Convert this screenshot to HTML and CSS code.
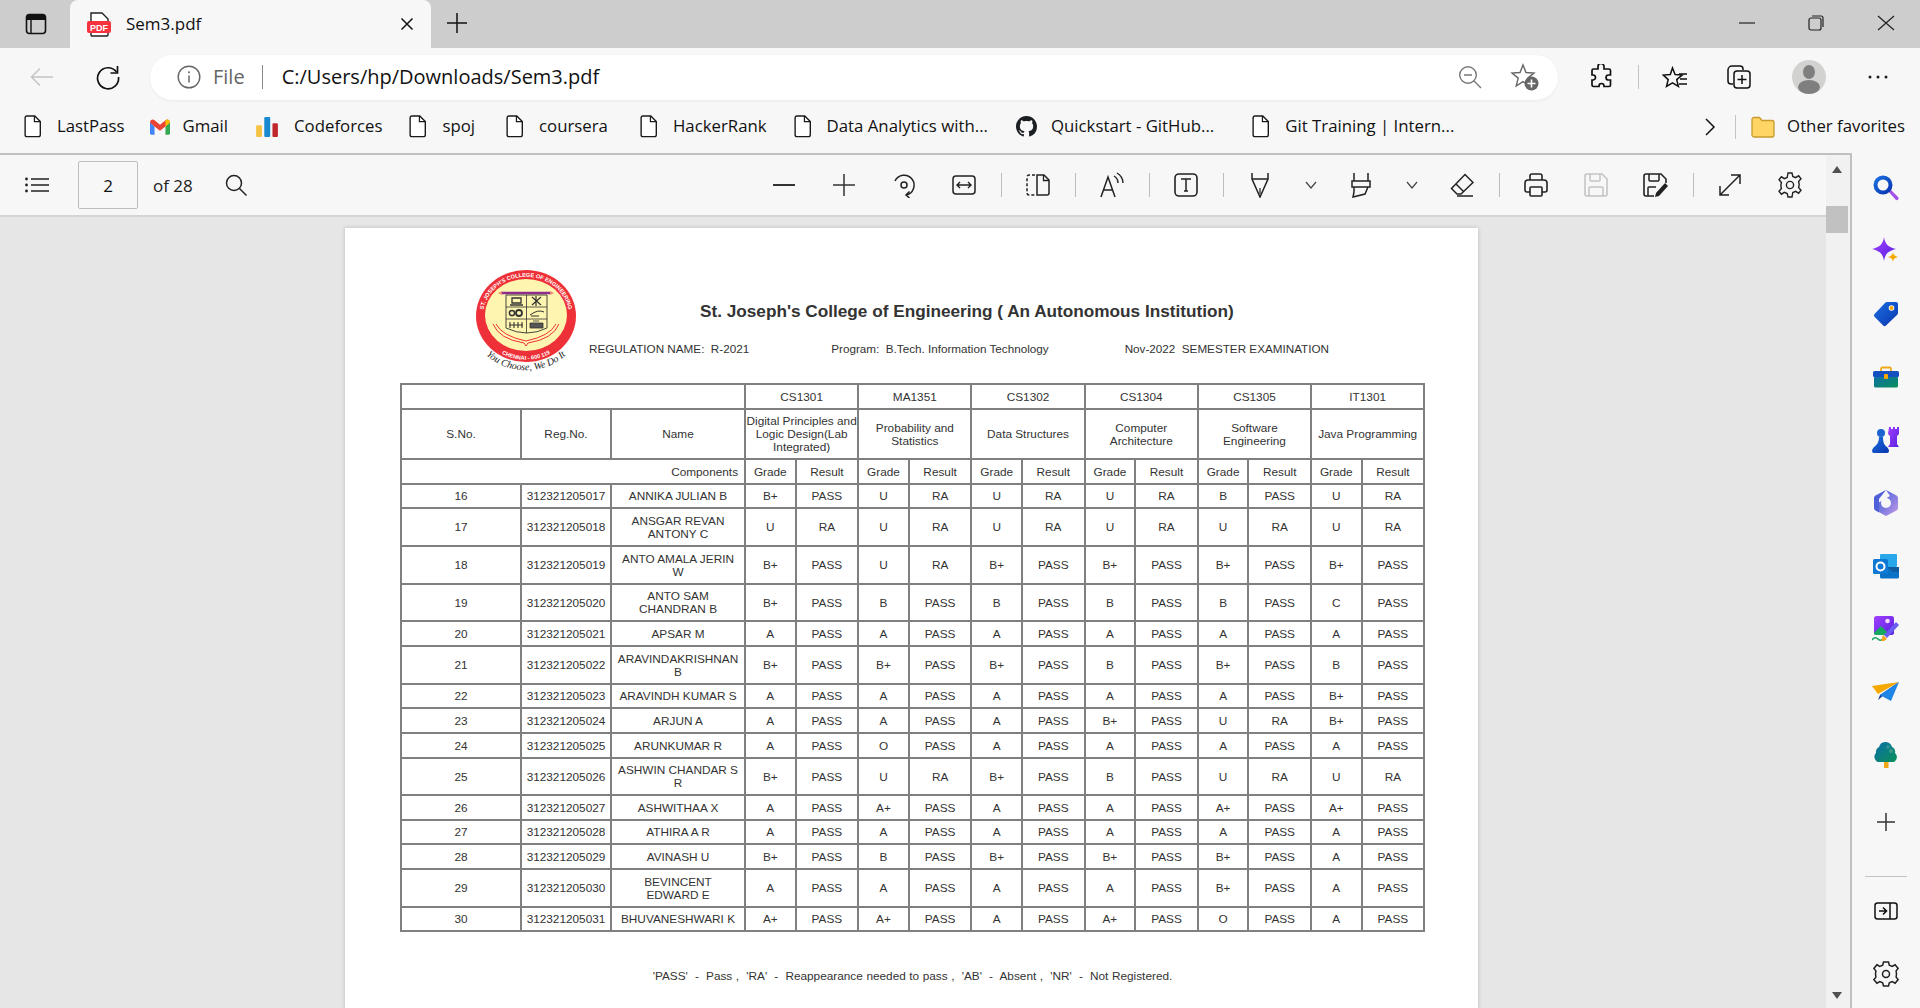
FILE: index.html
```html
<!DOCTYPE html>
<html lang="en">
<head>
  <meta charset="UTF-8">
  <title>Sem3.pdf</title>
  <link rel="stylesheet" href="styles.css">
</head>
<body>
  <svg class="sprites" width="0" height="0">
    <defs>
      <symbol id="doc" viewBox="0 0 18 24"><path d="M2.500 1h8.500l6 6v14a2 2 0 0 1-2 2H2.500a2 2 0 0 1-2-2V3a2 2 0 0 1 2-2z" transform="translate(.3 0) scale(.96 .98)" fill="#fff" stroke="#1a1a1a" stroke-width="1.500"/><path d="M10.500 1v6h6" fill="none" stroke="#1a1a1a" stroke-width="1.300"/></symbol>
      <linearGradient id="g-blue" x1="0" y1="0" x2="1" y2="1"><stop offset="0" stop-color="#1b6fe0"/><stop offset="1" stop-color="#0a35b0"/></linearGradient>
      <linearGradient id="g-purple" x1="0" y1="0" x2="1" y2="1"><stop offset="0" stop-color="#a040ff"/><stop offset="1" stop-color="#5a20e0"/></linearGradient>
      <linearGradient id="g-teal" x1="0" y1="0" x2="1" y2="1"><stop offset="0" stop-color="#0d6fa8"/><stop offset="1" stop-color="#0a8f5a"/></linearGradient>
      <linearGradient id="g-m365" x1="0" y1="0" x2="1" y2="1"><stop offset="0" stop-color="#3f63d8"/><stop offset=".5" stop-color="#7d7ae0"/><stop offset="1" stop-color="#c59ae6"/></linearGradient>
    </defs>
  </svg>

  <div class="app">
    <div class="tabstrip">
      <div class="tabstrip-btn">
        <svg width="22" height="22" viewBox="0 0 22 22"><rect x="1.500" y="1.500" width="19" height="19" rx="3" fill="none" stroke="#111" stroke-width="1.600"/><path d="M3 2h16a1.500 1.500 0 0 1 1.500 1.500V7h-19V3.500A1.500 1.500 0 0 1 3 2z" fill="#111"/><path d="M6 7v13" stroke="#111" stroke-width="1.400"/></svg>
      </div>
      <div class="tab">
        <svg width="24" height="25" viewBox="0 0 24 25"><path d="M4 1h11l6 6v16a1 1 0 0 1-1 1H5a1 1 0 0 1-1-1z" fill="#fff" stroke="#222" stroke-width="1.400"/><rect x="0" y="9" width="24" height="12" rx="2" fill="#f5333f"/><text x="12" y="18.500" class="pdf-mark">PDF</text></svg>
        <span class="tab-title">Sem3.pdf</span>
        <svg class="tab-close" width="14" height="14" viewBox="0 0 14 14"><path d="M1.500 1.500l11 11M12.500 1.500l-11 11" stroke="#111" stroke-width="1.500"/></svg>
      </div>
      <div class="new-tab">
        <svg width="22" height="22" viewBox="0 0 22 22"><path d="M11 1v20M1 11h20" stroke="#111" stroke-width="1.500"/></svg>
      </div>
      <div class="window-btns">
        <svg width="16" height="16" viewBox="0 0 16 16"><path d="M0 8h16" stroke="#222" stroke-width="1.200"/></svg>
        <svg width="16" height="16" viewBox="0 0 16 16"><rect x="1" y="3" width="12" height="12" rx="2" fill="none" stroke="#222" stroke-width="1.200"/><path d="M4 1h9a2 2 0 0 1 2 2v9" fill="none" stroke="#222" stroke-width="1.200"/></svg>
        <svg width="18" height="16" viewBox="0 0 18 16"><path d="M1 1l16 14M17 1L1 15" stroke="#222" stroke-width="1.200"/></svg>
      </div>
    </div>

    <div class="toolbar">
      <div class="nav-cell">
        <svg width="24" height="20" viewBox="0 0 24 20"><path d="M23 10H1.500M10 1.500L1.500 10l8.500 8.500" fill="none" stroke="#c4c4c4" stroke-width="1.500"/></svg>
      </div>
      <div class="nav-cell">
        <svg width="26" height="26" viewBox="0 0 26 26"><path d="M21.500 8A10.500 10.500 0 1 0 23.500 13" fill="none" stroke="#111" stroke-width="1.700"/><path d="M22.500 2v7h-7" fill="none" stroke="#111" stroke-width="1.700"/></svg>
      </div>
      <div class="address">
        <svg width="24" height="24" viewBox="0 0 24 24"><circle cx="12" cy="12" r="10.800" fill="none" stroke="#666" stroke-width="1.400"/><path d="M12 10.500v7" stroke="#666" stroke-width="1.500"/><circle cx="12" cy="7.300" r="1" fill="#666"/></svg>
        <span class="addr-file">File</span>
        <span class="addr-sep"></span>
        <span class="addr-url">C:/Users/hp/Downloads/Sem3.pdf</span>
        <div class="addr-icons">
          <svg width="24" height="24" viewBox="0 0 24 24"><circle cx="10" cy="10" r="8.300" fill="none" stroke="#777" stroke-width="1.400"/><path d="M6 10h8M16 16l7 7" stroke="#777" stroke-width="1.400"/></svg>
          <svg width="30" height="30" viewBox="0 0 30 30"><path d="M13 3l3 7.500 8 .6-6.200 5 2 7.900L13 19.600 6.200 24l2-7.900-6.200-5 8-.6z" fill="none" stroke="#666" stroke-width="1.400"/><circle cx="21.500" cy="21.500" r="7" fill="#666"/><path d="M21.500 17.500v8M17.500 21.500h8" stroke="#fff" stroke-width="1.600"/></svg>
        </div>
      </div>
      <div class="tool-right first">
        <svg width="22" height="26" viewBox="0 0 22 26"><path d="M8 2.500a3 3 0 0 1 6 0V5h5a1.500 1.500 0 0 1 1.500 1.500V11h-2a2.500 2.500 0 0 0 0 5h2v5a1.500 1.500 0 0 1-1.500 1.500h-5V22a2.500 2.500 0 0 0-5 0v.5H3.500A1.500 1.500 0 0 1 2 21v-5h1a2.500 2.500 0 0 0 0-5H2V6.500A1.500 1.500 0 0 1 3.500 5H8z" fill="none" stroke="#111" stroke-width="1.700"/></svg>
      </div>
      <span class="tool-sep"></span>
      <div class="tool-right">
        <svg width="26" height="26" viewBox="0 0 26 26"><path d="M10 2l2.600 6.600 7 .5-5.400 4.500 1.700 6.900L10 16.800 4 20.500l1.700-6.900L.8 9.100l7-.5z" transform="translate(.5 2)" fill="none" stroke="#111" stroke-width="1.500"/><path d="M17 10h8M18 15h7M17 20h8" stroke="#111" stroke-width="1.500"/></svg>
      </div>
      <div class="tool-right">
        <svg width="26" height="26" viewBox="0 0 26 26"><path d="M7 20H5a3 3 0 0 1-3-3V6a4 4 0 0 1 4-4h8a3 3 0 0 1 3 3v1" fill="none" stroke="#111" stroke-width="1.500"/><rect x="8" y="7" width="16" height="17" rx="3" fill="none" stroke="#111" stroke-width="1.500"/><path d="M16 11v9M11.500 15.500h9" stroke="#111" stroke-width="1.500"/></svg>
      </div>
      <div class="avatar-cell">
        <div class="avatar">
          <svg width="34" height="34" viewBox="0 0 34 34"><circle cx="17" cy="17" r="17" fill="#d2d2d0"/><ellipse cx="17" cy="12" rx="6" ry="7" fill="#7f7f7f"/><ellipse cx="17" cy="27" rx="11" ry="7" fill="#7f7f7f"/></svg>
        </div>
      </div>
      <div class="dots-cell">
        <svg width="22" height="6" viewBox="0 0 22 6"><circle cx="3" cy="3" r="1.500" fill="#222"/><circle cx="11" cy="3" r="1.500" fill="#222"/><circle cx="19" cy="3" r="1.500" fill="#222"/></svg>
      </div>
    </div>

    <div class="bookmarks">
      <div class="bm"><svg width="18" height="23"><use href="#doc"/></svg><span>LastPass</span></div>
      <div class="bm bm-gmail">
        <svg width="20" height="16" viewBox="0 0 22 17"><path d="M0 3v12.500A1.500 1.500 0 0 0 1.500 17H5V8z" fill="#4285f4"/><path d="M22 3v12.500a1.500 1.500 0 0 1-1.500 1.500H17V8z" fill="#34a853"/><path d="M0 3.500C0 .8 3 -.8 5 1l6 5 6-5c2-1.800 5-.2 5 2.500L17 8l-6 4.500L5 8z" fill="#ea4335"/><path d="M17 1c2-1.800 5-.2 5 2.500L17 8z" fill="#fbbc04"/></svg>
        <span>Gmail</span>
      </div>
      <div class="bm bm-cf">
        <svg width="24" height="20" viewBox="0 0 24 22"><rect x="0" y="9" width="6.500" height="13" rx="1.200" fill="#f6c445"/><rect x="9" y="0" width="6.500" height="22" rx="1.200" fill="#1a8ad0"/><rect x="18" y="7" width="6" height="15" rx="1.200" fill="#c0272d"/></svg>
        <span>Codeforces</span>
      </div>
      <div class="bm"><svg width="18" height="23"><use href="#doc"/></svg><span>spoj</span></div>
      <div class="bm bm-coursera"><svg width="18" height="23"><use href="#doc"/></svg><span>coursera</span></div>
      <div class="bm bm-hr"><svg width="18" height="23"><use href="#doc"/></svg><span>HackerRank</span></div>
      <div class="bm"><svg width="18" height="23"><use href="#doc"/></svg><span>Data Analytics with...</span></div>
      <div class="bm bm-gh">
        <svg width="21" height="21" viewBox="0 0 16 16"><path fill="#1b1f23" d="M8 0C3.580 0 0 3.580 0 8c0 3.540 2.290 6.530 5.470 7.590.4.07.55-.17.55-.38 0-.19-.01-.82-.01-1.490-2.010.37-2.530-.49-2.690-.94-.09-.23-.48-.94-.82-1.130-.28-.15-.68-.52-.01-.53.63-.01 1.080.58 1.230.82.72 1.210 1.870.87 2.330.66.07-.52.28-.87.51-1.070-1.780-.2-3.640-.89-3.640-3.950 0-.87.31-1.590.82-2.150-.08-.2-.36-1.020.08-2.120 0 0 .67-.21 2.200.82.64-.18 1.320-.27 2-.27.68 0 1.360.09 2 .27 1.530-1.040 2.200-.82 2.200-.82.44 1.100.16 1.920.08 2.120.51.56.82 1.270.82 2.150 0 3.070-1.870 3.750-3.650 3.950.29.25.54.73.54 1.480 0 1.070-.01 1.930-.01 2.200 0 .21.15.46.55.38A8.013 8.013 0 0 0 16 8c0-4.420-3.580-8-8-8z"/></svg>
        <span>Quickstart - GitHub...</span>
      </div>
      <div class="bm bm-git"><svg width="18" height="23"><use href="#doc"/></svg><span>Git Training | Intern...</span></div>
      <div class="bm-more">
        <svg width="12" height="18" viewBox="0 0 12 18"><path d="M2 1l8 8-8 8" fill="none" stroke="#111" stroke-width="1.500"/></svg>
        <span class="bm-sep"></span>
        <svg width="24" height="22" viewBox="0 0 24 22"><path d="M1 3.500A2 2 0 0 1 3 1.500h5.500L11 4.500h10A2 2 0 0 1 23 6.500V19a2 2 0 0 1-2 2H3a2 2 0 0 1-2-2z" fill="#ffd666" stroke="#c99a2e" stroke-width="1.300"/></svg>
        <span class="bm-other">Other favorites</span>
      </div>
    </div>

    <div class="main">
      <div class="viewer">
        <div class="viewer-col">
          <div class="pdfbar">
            <svg width="24" height="16" viewBox="0 0 24 16"><circle cx="1.500" cy="2" r="1.400" fill="#222"/><circle cx="1.500" cy="8" r="1.400" fill="#222"/><circle cx="1.500" cy="14" r="1.400" fill="#222"/><path d="M6 2h18M6 8h18M6 14h18" stroke="#222" stroke-width="1.400"/></svg>
            <div class="page-input">2</div>
            <span class="page-of">of 28</span>
            <svg class="pdf-search" width="22" height="22" viewBox="0 0 22 22"><circle cx="9" cy="9" r="7.500" fill="none" stroke="#222" stroke-width="1.500"/><path d="M14.500 14.500l7 7" stroke="#222" stroke-width="1.500"/></svg>

            <div class="pdf-tools">
              <div class="tool"><svg width="24" height="24" viewBox="0 0 24 24"><path d="M1 12h22" stroke="#333" stroke-width="2"/></svg></div>
              <div class="tool"><svg width="24" height="24" viewBox="0 0 24 24"><path d="M12 1v22M1 12h22" stroke="#333" stroke-width="1.500"/></svg></div>
              <div class="tool"><svg width="26" height="26" viewBox="0 0 26 26"><path d="M4 9a10 10 0 1 1 11 14" fill="none" stroke="#222" stroke-width="1.500"/><path d="M18.500 19.500L15 23l3.500 3" fill="none" stroke="#222" stroke-width="1.500"/><circle cx="13" cy="13" r="3" fill="none" stroke="#222" stroke-width="1.500"/></svg></div>
              <div class="tool"><svg width="24" height="20" viewBox="0 0 24 20"><rect x="1" y="1" width="22" height="18" rx="3" fill="none" stroke="#222" stroke-width="1.500"/><path d="M5 10h14M8 7l-3 3 3 3M16 7l3 3-3 3" fill="none" stroke="#222" stroke-width="1.400"/></svg></div>
              <span class="tool-div"></span>
              <div class="tool"><svg width="24" height="22" viewBox="0 0 24 22"><path d="M9 1H3a2 2 0 0 0-2 2v16a2 2 0 0 0 2 2h6" fill="none" stroke="#222" stroke-width="1.500" stroke-dasharray="3 2"/><path d="M11 1h7l5 5v13a2 2 0 0 1-2 2H11z" fill="none" stroke="#222" stroke-width="1.500"/><path d="M17.500 1v5.500H23" fill="none" stroke="#222" stroke-width="1.300"/></svg></div>
              <span class="tool-div"></span>
              <div class="tool"><svg width="24" height="26" viewBox="0 0 24 26"><path d="M1 25L8 5l7 20M3.500 18h9" fill="none" stroke="#222" stroke-width="1.500"/><path d="M14 4a8 8 0 0 1 4 7M17 1a12 12 0 0 1 6 10" fill="none" stroke="#222" stroke-width="1.400"/></svg></div>
              <span class="tool-div"></span>
              <div class="tool"><svg width="24" height="24" viewBox="0 0 24 24"><rect x="1" y="1" width="22" height="22" rx="4" fill="none" stroke="#222" stroke-width="1.600"/><path d="M7 6h10M12 6v12M10 18h4" fill="none" stroke="#222" stroke-width="1.500"/></svg></div>
              <span class="tool-div"></span>
              <div class="tool"><svg width="24" height="26" viewBox="0 0 24 26"><path d="M4 1v6l8 18 8-18V1M4 7h16" fill="none" stroke="#222" stroke-width="1.500"/><path d="M12 16v6" stroke="#222" stroke-width="1.200"/></svg></div>
              <div class="tool-chev"><svg width="12" height="8" viewBox="0 0 12 8"><path d="M1 1l5 6 5-6" fill="none" stroke="#444" stroke-width="1.200"/></svg></div>
              <div class="tool"><svg width="24" height="26" viewBox="0 0 24 26"><path d="M5 1v8M19 1v8M3 9h18v6H3zM5 15v5l-1 5 12-3 3-7" fill="none" stroke="#222" stroke-width="1.500"/></svg></div>
              <div class="tool-chev"><svg width="12" height="8" viewBox="0 0 12 8"><path d="M1 1l5 6 5-6" fill="none" stroke="#444" stroke-width="1.200"/></svg></div>
              <div class="tool"><svg width="24" height="24" viewBox="0 0 24 24"><path d="M15 1.500l8 8L11 21H7l-5.500-5.500zM6 11l8 8" fill="none" stroke="#222" stroke-width="1.500"/><path d="M7 23h16" stroke="#222" stroke-width="1.500"/></svg></div>
              <span class="tool-div"></span>
              <div class="tool"><svg width="24" height="24" viewBox="0 0 24 24"><path d="M6 7V3a2 2 0 0 1 2-2h8a2 2 0 0 1 2 2v4M6 19H3a2 2 0 0 1-2-2V10a3 3 0 0 1 3-3h16a3 3 0 0 1 3 3v7a2 2 0 0 1-2 2h-3" fill="none" stroke="#222" stroke-width="1.600"/><rect x="6" y="14" width="12" height="9" rx="1" fill="none" stroke="#222" stroke-width="1.600"/></svg></div>
              <div class="tool"><svg width="24" height="24" viewBox="0 0 24 24"><path d="M1 3a2 2 0 0 1 2-2h15l5 5v15a2 2 0 0 1-2 2H3a2 2 0 0 1-2-2z" fill="none" stroke="#c4c4c4" stroke-width="1.600"/><path d="M6 1v6a1 1 0 0 0 1 1h8a1 1 0 0 0 1-1V1M5 23v-8a1 1 0 0 1 1-1h12a1 1 0 0 1 1 1v8" fill="none" stroke="#c4c4c4" stroke-width="1.500"/></svg></div>
              <div class="tool"><svg width="26" height="24" viewBox="0 0 26 24"><path d="M11 23H3a2 2 0 0 1-2-2V3a2 2 0 0 1 2-2h15l5 5v4" fill="none" stroke="#222" stroke-width="1.600"/><path d="M6 1v6a1 1 0 0 0 1 1h8a1 1 0 0 0 1-1V1M5 23v-8a1 1 0 0 1 1-1h7" fill="none" stroke="#222" stroke-width="1.500"/><path d="M22 10l3 3-9 10-4 1 1-4z" fill="#222"/></svg></div>
              <span class="tool-div"></span>
              <div class="tool"><svg width="24" height="24" viewBox="0 0 24 24"><path d="M2 22L22 2M13 2h9v9M2 13v9h9" fill="none" stroke="#222" stroke-width="1.500"/></svg></div>
              <div class="tool"><svg width="24" height="26" viewBox="0 0 24 26"><path d="M10 1h4l.8 3.500 2.800 1.200 3-1.900 2.400 3-2.400 2.700.6 3-.6 3 2.400 2.700-2.400 3-3-1.900-2.800 1.200L14 25h-4l-.8-3.500-2.800-1.200-3 1.900L1 19.200l2.400-2.700-.6-3 .6-3L1 7.800l2.400-3 3 1.900 2.800-1.200z" fill="none" stroke="#222" stroke-width="1.400"/><circle cx="12" cy="13" r="3.600" fill="none" stroke="#222" stroke-width="1.400"/></svg></div>
            </div>
          </div>

          <div class="doc-area">
            <div class="page">
              <div class="pdf-head">
                <svg width="100" height="103" viewBox="0 0 100 103">
                  <defs>
                    <path id="arc-top" d="M8.500 56A43 39 0 1 1 91.500 56"/>
                    <path id="arc-bottom" d="M26.500 84.100A47 43 0 0 0 73.500 84.100"/>
                    <path id="arc-motto" d="M8 83c22 23 62 23 84 0"/>
                  </defs>
                  <ellipse cx="50" cy="46" rx="50" ry="46" fill="#ee3138"/>
                  <ellipse cx="50" cy="45" rx="41" ry="36" fill="#fdf5b0"/>
                  <text class="logo-ring"><textPath href="#arc-top" startOffset="50%">ST. JOSEPH'S COLLEGE OF ENGINEERING</textPath></text>
                  <text class="logo-ring"><textPath href="#arc-bottom" startOffset="50%">CHENNAI - 600 119</textPath></text>
                  <text class="logo-motto"><textPath href="#arc-motto" startOffset="50%">You Choose, We Do It</textPath></text>
                  <path d="M25 23h50" stroke="#8e2c8e" stroke-width="2.500"/>
                  <path d="M22 23l4-2v4zM78 23l-4-2v4z" fill="#e87"/>
                  <path d="M30 25h41v33q-20 10-41 0z" fill="#fdf5b0" stroke="#333" stroke-width=".9"/>
                  <path d="M50.500 25v38M30 37h41M30 49h41" stroke="#333" stroke-width=".8"/>
                  <path d="M36 28h9v5h-9zM34 35h13" fill="none" stroke="#333" stroke-width="1.300"/>
                  <path d="M56 27l9 8M65 27l-9 8M60 26v10" stroke="#333" stroke-width="1.200"/>
                  <circle cx="36" cy="43" r="2.600" fill="none" stroke="#333" stroke-width="1.500"/>
                  <circle cx="43" cy="43" r="3" fill="none" stroke="#333" stroke-width="1.800"/>
                  <path d="M54 45q8-6 14-3M55 46h8" fill="none" stroke="#333" stroke-width="1"/>
                  <path d="M34 52v6M38 52v6M42 52v6M46 52v6M33 55h14" fill="none" stroke="#333" stroke-width="1.100"/>
                  <path d="M54 53h13v5h-13z M57 51h6" fill="#555" stroke="#333" stroke-width=".8"/>
                  <path d="M17 54q6 15 31 19l2 3 2-3q25-4 31-19M20 54q6 12 30 17 24-5 30-17" fill="none" stroke="#ee3138" stroke-width="1"/>
                </svg>
                <div class="head-text">
                  <div class="college-name">St. Joseph's College of Engineering ( An Autonomous Institution)</div>
                  <div class="head-meta">
                    <span>REGULATION NAME:&nbsp; R-2021</span>
                    <span class="meta-program">Program:&nbsp; B.Tech. Information Technology</span>
                    <span>Nov-2022&nbsp; SEMESTER EXAMINATION</span>
                  </div>
                </div>
              </div>

              <table class="results">
                <colgroup>
                  <col class="col-sno"><col class="col-reg"><col class="col-name">
                  <col class="col-grade"><col class="col-result">
                  <col class="col-grade"><col class="col-result">
                  <col class="col-grade"><col class="col-result">
                  <col class="col-grade"><col class="col-result">
                  <col class="col-grade"><col class="col-result">
                  <col class="col-grade"><col class="col-result">
                </colgroup>
                <tr class="r25"><td colspan="3"></td><td colspan="2">CS1301</td><td colspan="2">MA1351</td><td colspan="2">CS1302</td><td colspan="2">CS1304</td><td colspan="2">CS1305</td><td colspan="2">IT1301</td></tr>
                <tr class="r50"><td>S.No.</td><td>Reg.No.</td><td>Name</td><td colspan="2">Digital Principles and Logic Design(Lab Integrated)</td><td colspan="2">Probability and Statistics</td><td colspan="2">Data Structures</td><td colspan="2">Computer Architecture</td><td colspan="2">Software Engineering</td><td colspan="2">Java Programming</td></tr>
                <tr class="r25"><td colspan="3" class="components">Components</td><td>Grade</td><td>Result</td><td>Grade</td><td>Result</td><td>Grade</td><td>Result</td><td>Grade</td><td>Result</td><td>Grade</td><td>Result</td><td>Grade</td><td>Result</td></tr>
                <tr class="r24"><td>16</td><td>312321205017</td><td>ANNIKA JULIAN B</td><td>B+</td><td>PASS</td><td>U</td><td>RA</td><td>U</td><td>RA</td><td>U</td><td>RA</td><td>B</td><td>PASS</td><td>U</td><td>RA</td></tr>
                <tr class="r38"><td>17</td><td>312321205018</td><td>ANSGAR REVAN<br>ANTONY C</td><td>U</td><td>RA</td><td>U</td><td>RA</td><td>U</td><td>RA</td><td>U</td><td>RA</td><td>U</td><td>RA</td><td>U</td><td>RA</td></tr>
                <tr class="r38"><td>18</td><td>312321205019</td><td>ANTO AMALA JERIN<br>W</td><td>B+</td><td>PASS</td><td>U</td><td>RA</td><td>B+</td><td>PASS</td><td>B+</td><td>PASS</td><td>B+</td><td>PASS</td><td>B+</td><td>PASS</td></tr>
                <tr class="r37"><td>19</td><td>312321205020</td><td>ANTO SAM<br>CHANDRAN B</td><td>B+</td><td>PASS</td><td>B</td><td>PASS</td><td>B</td><td>PASS</td><td>B</td><td>PASS</td><td>B</td><td>PASS</td><td>C</td><td>PASS</td></tr>
                <tr class="r25"><td>20</td><td>312321205021</td><td>APSAR M</td><td>A</td><td>PASS</td><td>A</td><td>PASS</td><td>A</td><td>PASS</td><td>A</td><td>PASS</td><td>A</td><td>PASS</td><td>A</td><td>PASS</td></tr>
                <tr class="r38"><td>21</td><td>312321205022</td><td>ARAVINDAKRISHNAN<br>B</td><td>B+</td><td>PASS</td><td>B+</td><td>PASS</td><td>B+</td><td>PASS</td><td>B</td><td>PASS</td><td>B+</td><td>PASS</td><td>B</td><td>PASS</td></tr>
                <tr class="r24"><td>22</td><td>312321205023</td><td>ARAVINDH KUMAR S</td><td>A</td><td>PASS</td><td>A</td><td>PASS</td><td>A</td><td>PASS</td><td>A</td><td>PASS</td><td>A</td><td>PASS</td><td>B+</td><td>PASS</td></tr>
                <tr class="r25"><td>23</td><td>312321205024</td><td>ARJUN A</td><td>A</td><td>PASS</td><td>A</td><td>PASS</td><td>A</td><td>PASS</td><td>B+</td><td>PASS</td><td>U</td><td>RA</td><td>B+</td><td>PASS</td></tr>
                <tr class="r25"><td>24</td><td>312321205025</td><td>ARUNKUMAR R</td><td>A</td><td>PASS</td><td>O</td><td>PASS</td><td>A</td><td>PASS</td><td>A</td><td>PASS</td><td>A</td><td>PASS</td><td>A</td><td>PASS</td></tr>
                <tr class="r37"><td>25</td><td>312321205026</td><td>ASHWIN CHANDAR S<br>R</td><td>B+</td><td>PASS</td><td>U</td><td>RA</td><td>B+</td><td>PASS</td><td>B</td><td>PASS</td><td>U</td><td>RA</td><td>U</td><td>RA</td></tr>
                <tr class="r25"><td>26</td><td>312321205027</td><td>ASHWITHAA X</td><td>A</td><td>PASS</td><td>A+</td><td>PASS</td><td>A</td><td>PASS</td><td>A</td><td>PASS</td><td>A+</td><td>PASS</td><td>A+</td><td>PASS</td></tr>
                <tr class="r24"><td>27</td><td>312321205028</td><td>ATHIRA A R</td><td>A</td><td>PASS</td><td>A</td><td>PASS</td><td>A</td><td>PASS</td><td>A</td><td>PASS</td><td>A</td><td>PASS</td><td>A</td><td>PASS</td></tr>
                <tr class="r25"><td>28</td><td>312321205029</td><td>AVINASH U</td><td>B+</td><td>PASS</td><td>B</td><td>PASS</td><td>B+</td><td>PASS</td><td>B+</td><td>PASS</td><td>B+</td><td>PASS</td><td>A</td><td>PASS</td></tr>
                <tr class="r38"><td>29</td><td>312321205030</td><td>BEVINCENT<br>EDWARD E</td><td>A</td><td>PASS</td><td>A</td><td>PASS</td><td>A</td><td>PASS</td><td>A</td><td>PASS</td><td>B+</td><td>PASS</td><td>A</td><td>PASS</td></tr>
                <tr class="r24"><td>30</td><td>312321205031</td><td>BHUVANESHWARI K</td><td>A+</td><td>PASS</td><td>A+</td><td>PASS</td><td>A</td><td>PASS</td><td>A+</td><td>PASS</td><td>O</td><td>PASS</td><td>A</td><td>PASS</td></tr>
              </table>

              <div class="legend">'PASS'  -  Pass ,  'RA'  -  Reappearance needed to pass ,  'AB'  -  Absent ,  'NR'  -  Not Registered.</div>
            </div>
          </div>
        </div>

        <div class="scrollbar">
          <span class="arrow-up"></span>
          <span class="thumb"></span>
          <span class="arrow-down"></span>
        </div>
      </div>

      <div class="sidebar">
        <div class="side-icon"><svg width="26" height="26" viewBox="0 0 26 26"><path d="M15 16l2-2 8 8a1.500 1.500 0 0 1-2.500 2.500z" fill="#a44ee8"/><circle cx="10" cy="10" r="7.500" fill="none" stroke="url(#g-blue)" stroke-width="4"/></svg></div>
        <div class="side-icon"><svg width="28" height="28" viewBox="0 0 28 28"><path d="M12 0c1 7 4 10 12 12-8 2-11 5-12 12-1-7-4-10-12-12 8-2 11-5 12-12z" fill="url(#g-purple)"/><path d="M21 15c.5 3 1.500 4 5 5-3.500 1-4.500 2-5 5-.5-3-1.500-4-5-5 3.500-1 4.500-2 5-5z" fill="#f5a800"/></svg></div>
        <div class="side-icon"><svg width="26" height="26" viewBox="0 0 26 26"><path d="M14 1h9a2 2 0 0 1 2 2v9a3 3 0 0 1-1 2L13 24.500a2 2 0 0 1-2.800 0L1.500 15.800a2 2 0 0 1 0-2.800L12 2a3 3 0 0 1 2-1z" fill="url(#g-blue)"/><circle cx="18.500" cy="7" r="2.800" fill="#fff"/><circle cx="18.500" cy="7" r="2" fill="#f5a800"/></svg></div>
        <div class="side-icon"><svg width="26" height="22" viewBox="0 0 26 22"><path d="M8 6V3a1.500 1.500 0 0 1 1.500-1.500h7A1.500 1.500 0 0 1 18 3v3" fill="none" stroke="#f0a818" stroke-width="1.800"/><rect x="1" y="10" width="24" height="11.500" rx="1.500" fill="url(#g-teal)"/><rect x="0" y="5" width="26" height="6" rx="1.500" fill="#1550c0"/><rect x="11" y="8" width="4" height="5" rx="1" fill="#f5a800"/></svg></div>
        <div class="side-icon"><svg width="28" height="28" viewBox="0 0 28 28"><path d="M17 1h2v2h2V1h2v2h2V1h2v7l-2 2v8l2 3H16l2-3v-8l-2-2z" fill="url(#g-purple)"/><circle cx="9" cy="7" r="4" fill="#1d63d0"/><path d="M7 11h4c0 5 1 8 4 10 1 1 2 3 2 4a2 2 0 0 1-2 2H2a2 2 0 0 1-2-2c0-1 1-3 2-4 3-2 5-5 5-10z" fill="url(#g-blue)"/></svg></div>
        <div class="side-icon"><svg width="26" height="28" viewBox="0 0 26 28"><path d="M13 1l10.500 5.500a3 3 0 0 1 1.500 2.500v10a3 3 0 0 1-1.500 2.500L13 27l-8-4.500V14L17 7z" fill="url(#g-m365)"/><path d="M13 1L2.500 6.500A3 3 0 0 0 1 9v10a3 3 0 0 0 1.500 2.500L6 23.500V10z" fill="#4f5fd8"/><circle cx="13" cy="14" r="5" fill="#f7f7f7"/></svg></div>
        <div class="side-icon"><svg width="26" height="26" viewBox="0 0 26 26"><rect x="7" y="1" width="17" height="13" rx="1" fill="#28a8ea"/><path d="M7 14h19v10a1.500 1.500 0 0 1-1.500 1.500H8.500A1.500 1.500 0 0 1 7 24z" fill="#0a72c6"/><path d="M14 14h12v-1L26 19l-6 0z" fill="#0e5ba0"/><rect x="0" y="6" width="15" height="15" rx="1.500" fill="#0f78d4"/><circle cx="7.500" cy="13.500" r="4" fill="none" stroke="#fff" stroke-width="2"/></svg></div>
        <div class="side-icon"><svg width="28" height="28" viewBox="0 0 28 28"><rect x="2" y="1" width="20" height="19" rx="2.500" fill="url(#g-purple)"/><circle cx="15.500" cy="6" r="2.300" fill="#f3d9ff"/><path d="M2 18l7-7 8 8-1 1H4a2 2 0 0 1-2-2z" fill="#17a860"/><path d="M0 25q3-4 6-1t6-1" fill="none" stroke="#17a860" stroke-width="1.500"/><path d="M12 20l12-13 3 3-12 13z" fill="#6a5cf0"/><path d="M11 20l4 4-3 2h-3z" fill="#f0a818"/></svg></div>
        <div class="side-icon"><svg width="28" height="20" viewBox="0 0 28 20"><path d="M0 4L27 0 6 12z" fill="#f5a800"/><path d="M27 0L8 13l-2 5z" fill="#0b3a9a"/><path d="M27 0l-8 19-11-6z" fill="#1f86e6"/></svg></div>
        <div class="side-icon"><svg width="24" height="26" viewBox="0 0 24 26"><rect x="10" y="18" width="4.500" height="8" fill="#f0a818"/><path d="M12 0a7 7 0 0 1 6 5 5.500 5.500 0 0 1 3 6 5.500 5.500 0 0 1-1 9H4a5.500 5.500 0 0 1-2-9 6 6 0 0 1 3-6 7 7 0 0 1 7-5z" fill="url(#g-teal)"/><circle cx="17" cy="9" r="2" fill="#3d9a8a"/><circle cx="14" cy="5" r="2" fill="#2f8f96"/></svg></div>
        <div class="side-icon side-add"><svg width="20" height="20" viewBox="0 0 20 20"><path d="M10 1v18M1 10h18" stroke="#333" stroke-width="1.500"/></svg></div>
        <div class="side-bottom">
          <span class="side-rule"></span>
          <div class="side-panel"><svg width="24" height="18" viewBox="0 0 24 18"><rect x="1" y="1" width="22" height="16" rx="2.500" fill="none" stroke="#111" stroke-width="1.500"/><path d="M16 1v16" stroke="#111" stroke-width="1.500"/><path d="M5 9h7M9 5.500L12.500 9 9 12.500" fill="none" stroke="#111" stroke-width="1.600"/></svg></div>
          <div class="side-gear"><svg width="26" height="26" viewBox="0 0 26 26"><path d="M10.500 1h5l.8 3.300 2.900 1.200 2.900-1.700 3 3.600-2 2.500.4 3.100-.4 3.100 2 2.500-3 3.600-2.900-1.700-2.900 1.200-.8 3.300h-5l-.8-3.300-2.900-1.200-2.900 1.700-3-3.600 2-2.500-.4-3.100.4-3.100-2-2.500 3-3.600 2.900 1.700 2.900-1.200z" fill="none" stroke="#222" stroke-width="1.500"/><circle cx="13" cy="13" r="3.500" fill="none" stroke="#222" stroke-width="1.500"/></svg></div>
        </div>
      </div>
    </div>
  </div>
</body>
</html>
```
FILE: styles.css
```css
* {
  box-sizing: border-box;
}
html, body {
  margin: 0;
  height: 100%;
  overflow: hidden;
}
body {
  font-family: "Open Sans", "Noto Sans", sans-serif;
  color: #111;
  background: #f7f7f7;
}
svg {
  display: block;
  flex: none;
}
.sprites {
  height: 0;
  width: 0;
}
.app {
  height: 1008px;
  display: flex;
  flex-direction: column;
}

/* tab strip */
.tabstrip {
  height: 48px;
  flex: none;
  background: #cdcdcd;
  display: flex;
}
.tabstrip-btn {
  width: 70px;
  padding: 13px 0 0 25px;
}
.tab {
  width: 361px;
  background: #f7f7f7;
  border-radius: 8px 8px 0 0;
  display: flex;
  align-items: center;
  padding-left: 17px;
}
.pdf-mark {
  font-family: "Liberation Sans", sans-serif;
  font-size: 9px;
  font-weight: bold;
  fill: #fff;
  text-anchor: middle;
}
.tab-title {
  font-size: 17px;
  margin-left: 15px;
  padding-bottom: 2px;
}
.tab-close {
  margin-left: auto;
  margin-right: 17px;
}
.new-tab {
  padding: 12px 0 0 15px;
}
.window-btns {
  margin-left: auto;
  display: flex;
  gap: 53px;
  padding: 15px 25px 0 0;
}

/* address row */
.toolbar {
  height: 52px;
  flex: none;
  display: flex;
  align-items: center;
  padding: 6px 11px 0 9px;
}
.nav-cell {
  width: 66px;
  display: flex;
  justify-content: center;
}
.address {
  flex: 1;
  height: 45px;
  margin-left: 9px;
  background: #fff;
  border-radius: 23px;
  box-shadow: 0 1px 3px rgba(0, 0, 0, 0.06);
  display: flex;
  align-items: center;
  padding: 0 18px 0 27px;
}
.addr-file {
  font-size: 20px;
  color: #666;
  margin-left: 12px;
  padding-bottom: 2px;
}
.addr-sep {
  width: 1px;
  height: 24px;
  background: #888;
  margin: 0 19px 0 17px;
}
.addr-url {
  font-size: 20px;
  color: #111;
  padding-bottom: 2px;
}
.addr-icons {
  margin-left: auto;
  display: flex;
  align-items: center;
  gap: 28px;
}
.tool-right {
  width: 64px;
  display: flex;
  justify-content: center;
}
.tool-right.first {
  margin-left: 11px;
}
.tool-sep {
  width: 10px;
  display: flex;
  justify-content: center;
}
.tool-sep::before {
  content: "";
  width: 1px;
  height: 24px;
  background: #c4c4c4;
}
.avatar-cell {
  width: 76px;
  display: flex;
  justify-content: center;
}
.dots-cell {
  width: 62px;
  display: flex;
  justify-content: center;
}

/* bookmarks */
.bookmarks {
  height: 53px;
  flex: none;
  display: flex;
  align-items: center;
  gap: 27px;
  padding-left: 24px;
  font-size: 16.800px;
}
.bm {
  display: flex;
  align-items: center;
  gap: 15px;
  white-space: nowrap;
}
.bm span {
  padding-bottom: 2px;
}
.bm-gmail {
  gap: 12px;
  margin-left: -1px;
}
.bm-coursera {
  margin-left: 4px;
}
.bm-hr {
  margin-left: 5px;
}
.bm-gh {
  gap: 14px;
  margin-left: 1px;
}
.bm-git {
  margin-left: 11px;
}
.bm-more {
  margin-left: auto;
  display: flex;
  align-items: center;
  padding-right: 15px;
}
.bm-sep {
  width: 1px;
  height: 24px;
  background: #c4c4c4;
  margin: 0 15px 0 19px;
}
.bm-other {
  margin-left: 12px;
  padding-bottom: 2px;
}

/* main area */
.main {
  flex: 1;
  min-height: 0;
  display: flex;
}
.viewer {
  width: 1852px;
  flex: none;
  display: flex;
  border-top: 2px solid #c0c0c0;
  border-right: 2px solid #c0c0c0;
}
.viewer-col {
  flex: 1;
  min-width: 0;
  display: flex;
  flex-direction: column;
}
.pdfbar {
  height: 62px;
  flex: none;
  background: #f7f7f7;
  border-bottom: 2px solid #d4d4d4;
  display: flex;
  align-items: center;
  padding: 0 6px 0 25px;
}
.page-input {
  width: 60px;
  height: 48px;
  margin-left: 29px;
  background: #f7f7f7;
  border: 1px solid #bdbdbd;
  border-radius: 2px;
  display: flex;
  align-items: center;
  justify-content: center;
  font-size: 17px;
}
.page-of {
  font-size: 17px;
  margin-left: 15px;
  color: #222;
}
.pdf-search {
  margin-left: 32px;
}
.pdf-tools {
  margin-left: auto;
  display: flex;
  align-items: center;
}
.tool {
  width: 60px;
  display: flex;
  justify-content: center;
}
.tool-chev {
  width: 41px;
  display: flex;
  justify-content: center;
}
.tool-div {
  width: 14px;
  display: flex;
  justify-content: center;
}
.tool-div::before {
  content: "";
  width: 1px;
  height: 24px;
  background: #bdbdbd;
}

/* pdf page */
.doc-area {
  flex: 1;
  min-height: 0;
  overflow: hidden;
  background: #e6e6e6;
  padding: 11px 3px 0 0;
  display: flex;
  justify-content: center;
  align-items: flex-start;
}
.page {
  width: 1133px;
  flex: none;
  background: #fff;
  box-shadow: 0 0 4px rgba(0, 0, 0, 0.2);
  padding: 42px 53px 40px 55px;
  font-family: "Liberation Sans", Arial, sans-serif;
  font-size: 11.800px;
  color: #333;
}
.pdf-head {
  display: flex;
  height: 113px;
  padding-left: 76px;
}
.logo-ring {
  font-size: 5.600px;
  font-weight: bold;
  fill: #fff;
  text-anchor: middle;
}
.logo-motto {
  font-family: "Liberation Serif", serif;
  font-style: italic;
  font-size: 10px;
  fill: #222;
  text-anchor: middle;
}
.head-text {
  margin-left: 13px;
}
.college-name {
  font-size: 17.200px;
  font-weight: bold;
  padding: 30px 0 0 111px;
  line-height: 22px;
  white-space: nowrap;
}
.head-meta {
  display: flex;
  gap: 79px;
  margin-top: 20px;
  font-size: 11.700px;
  line-height: 14px;
  white-space: nowrap;
}
.meta-program {
  margin: 0 -3px 0 3px;
}
.results {
  border-collapse: collapse;
  table-layout: fixed;
  width: 1023px;
  line-height: 13px;
  text-align: center;
}
.results td {
  border: 2px solid #808080;
  padding: 1px 0 0;
}
.results .components {
  text-align: right;
  padding-right: 6px;
}
.col-sno { width: 120px; }
.col-reg { width: 90px; }
.col-name { width: 134px; }
.col-grade { width: 50.500px; }
.col-result { width: 62.700px; }
.r24 { height: 24px; }
.r25 { height: 25px; }
.r37 { height: 37px; }
.r38 { height: 38px; }
.r50 { height: 50px; }
.legend {
  margin-top: 37px;
  text-align: center;
  font-size: 11.800px;
  word-spacing: 0.300px;
  white-space: pre;
}

/* scrollbar */
.scrollbar {
  width: 24px;
  flex: none;
  background: #f1f1f1;
  display: flex;
  flex-direction: column;
  align-items: center;
  padding: 11px 2px 9px 0;
}
.arrow-up {
  border: 5px solid transparent;
  border-top: 0;
  border-bottom: 7px solid #505050;
}
.arrow-down {
  margin-top: auto;
  border: 5px solid transparent;
  border-bottom: 0;
  border-top: 7px solid #505050;
}
.thumb {
  width: 22px;
  height: 27px;
  margin-top: 33px;
  background: #c1c1c1;
}

/* right sidebar */
.sidebar {
  flex: 1;
  display: flex;
  flex-direction: column;
  align-items: center;
  padding: 3px 0 0;
}
.side-icon {
  height: 63px;
  flex: none;
  display: flex;
  align-items: center;
  justify-content: center;
}
.side-add {
  margin-top: 4px;
}
.side-bottom {
  margin-top: auto;
  display: flex;
  flex-direction: column;
  align-items: center;
  padding-bottom: 21px;
}
.side-rule {
  width: 42px;
  height: 1px;
  background: #c4c4c4;
}
.side-panel {
  margin-top: 25px;
}
.side-gear {
  margin-top: 41px;
}
```
